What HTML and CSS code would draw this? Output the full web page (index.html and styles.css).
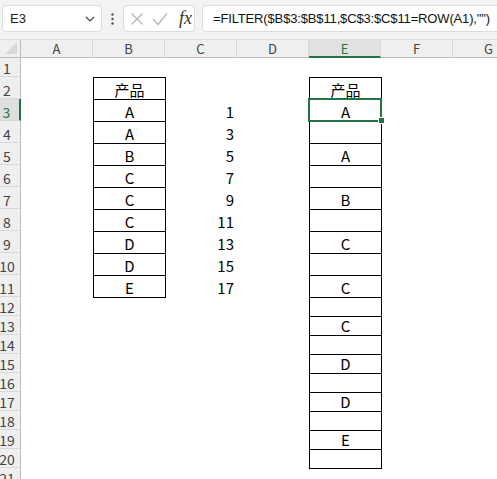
FILE: index.html
```html
<!DOCTYPE html>
<html>
<head>
<meta charset="utf-8">
<link rel="stylesheet" href="styles.css">
</head>
<body>
<div class="toolbar">
  <div class="namebox"><span>E3</span>
    <svg class="chev" width="10" height="6" viewBox="0 0 10 6"><path d="M1 1 L5 5 L9 1" fill="none" stroke="#444" stroke-width="1.2"/></svg>
  </div>
  <div class="dots">
    <svg width="3" height="12" viewBox="0 0 3 12"><circle cx="1.5" cy="1.5" r="1.2" fill="#555"/><circle cx="1.5" cy="6" r="1.2" fill="#555"/><circle cx="1.5" cy="10.5" r="1.2" fill="#555"/></svg>
  </div>
  <div class="fxbox">
    <svg class="ico" width="14" height="14" viewBox="0 0 14 14"><path d="M1.5 1.5 L12.5 12.5 M12.5 1.5 L1.5 12.5" stroke="#b5b5b5" stroke-width="1.2" fill="none"/></svg>
    <svg class="ico" width="16" height="14" viewBox="0 0 16 14"><path d="M1 7 L6 12.5 L15 1.5" stroke="#b5b5b5" stroke-width="1.2" fill="none"/></svg>
    <span class="fx">fx</span>
  </div>
  <div class="formula">=FILTER($B$3:$B$11,$C$3:$C$11=ROW(A1),"")</div>
</div>
<div class="sheet">
  <div class="corner"><svg width="12" height="12" viewBox="0 0 12 12"><path d="M12 0 L12 12 L0 12 Z" fill="#d9d9d9"/></svg></div>
  <div class="ch">A</div><div class="ch">B</div><div class="ch">C</div><div class="ch">D</div><div class="ch sel">E</div><div class="ch">F</div><div class="ch">G</div>

  <div class="rh">1</div>
  <div class="rh">2</div><div class="cell cb bx">产品</div><div class="cell ce bx">产品</div>
  <div class="rh sel">3</div><div class="cell cb bx">A</div><div class="cell cc">1</div><div class="cell ce bx active">A<span class="selbox"></span><span class="handle"></span></div>
  <div class="rh">4</div><div class="cell cb bx">A</div><div class="cell cc">3</div><div class="cell ce bx"></div>
  <div class="rh">5</div><div class="cell cb bx">B</div><div class="cell cc">5</div><div class="cell ce bx">A</div>
  <div class="rh">6</div><div class="cell cb bx">C</div><div class="cell cc">7</div><div class="cell ce bx"></div>
  <div class="rh">7</div><div class="cell cb bx">C</div><div class="cell cc">9</div><div class="cell ce bx">B</div>
  <div class="rh">8</div><div class="cell cb bx">C</div><div class="cell cc">11</div><div class="cell ce bx"></div>
  <div class="rh">9</div><div class="cell cb bx">D</div><div class="cell cc">13</div><div class="cell ce bx">C</div>
  <div class="rh">10</div><div class="cell cb bx">D</div><div class="cell cc">15</div><div class="cell ce bx"></div>
  <div class="rh">11</div><div class="cell cb bx last">E</div><div class="cell cc">17</div><div class="cell ce bx">C</div>
  <div class="rh">12</div><div class="cell ce bx"></div>
  <div class="rh">13</div><div class="cell ce bx">C</div>
  <div class="rh">14</div><div class="cell ce bx"></div>
  <div class="rh">15</div><div class="cell ce bx">D</div>
  <div class="rh">16</div><div class="cell ce bx"></div>
  <div class="rh">17</div><div class="cell ce bx">D</div>
  <div class="rh">18</div><div class="cell ce bx"></div>
  <div class="rh">19</div><div class="cell ce bx">E</div>
  <div class="rh">20</div><div class="cell ce bx last"></div>
  <div class="rh">21</div>
</div>
</body>
</html>
```
FILE: styles.css
```css
* { box-sizing: border-box; }
body {
  margin: 0;
  width: 497px;
  height: 479px;
  overflow: hidden;
  background: #fff;
  font-family: "Noto Sans CJK SC", sans-serif;
}
.toolbar {
  height: 40px;
  background: #f3f3f3;
  border-bottom: 1px solid #e1e1e1;
  display: flex;
  align-items: flex-start;
  padding: 5px 0 0 2px;
  white-space: nowrap;
  overflow: hidden;
}
.toolbar > * { flex-shrink: 0; }
.namebox {
  width: 100px;
  height: 27px;
  background: #fff;
  border: 1px solid #dcdcdc;
  border-radius: 4px;
  display: flex;
  align-items: center;
  justify-content: space-between;
  padding: 0 6px 0 7px;
  font: 13px "Liberation Sans", sans-serif;
  color: #222;
}
.dots {
  width: 21px;
  height: 27px;
  display: flex;
  align-items: center;
  justify-content: center;
}
.fxbox {
  width: 72px;
  height: 27px;
  background: #fff;
  border: 1px solid #dcdcdc;
  border-radius: 4px;
  display: flex;
  align-items: center;
  padding-left: 6px;
  gap: 8px;
}
.fx {
  font: italic 18px "Liberation Serif", serif;
  color: #333;
  margin-left: 3px;
}
.formula {
  margin-left: 7px;
  width: 320px;
  height: 27px;
  background: #fff;
  border: 1px solid #dcdcdc;
  border-radius: 4px;
  padding-left: 10px;
  display: flex;
  align-items: center;
  font: 13px "Liberation Sans", sans-serif;
  color: #111;
  letter-spacing: -0.15px;
}
.sheet {
  display: grid;
  grid-template-columns: 21px repeat(7, 72px);
  grid-template-rows: 18px 19px repeat(10, 22px) repeat(10, 19px);
}
.corner {
  grid-column: 1;
  background: #efefef;
  border-right: 1px solid #bdbdbd;
  border-bottom: 1px solid #bdbdbd;
  display: flex;
  align-items: flex-end;
  justify-content: flex-end;
  padding: 0 3px 3px 0;
}
.ch {
  background: #efefef;
  border-right: 1px solid #d8d8d8;
  border-bottom: 1px solid #bdbdbd;
  display: flex;
  align-items: center;
  justify-content: center;
  font-size: 13px;
  line-height: 1;
  color: #444;
}
.ch.sel {
  background: #e1e1e1;
  border-bottom: 2px solid #217346;
  color: #217346;
}
.rh {
  grid-column: 1;
  background: #efefef;
  border-right: 1px solid #bdbdbd;
  border-bottom: 1px solid #d8d8d8;
  display: flex;
  align-items: flex-end;
  justify-content: center;
  padding: 0 6px 1px 0;
  font-size: 14px;
  line-height: 1;
  color: #444;
}
.rh.sel {
  background: #dedede;
  border-right: 2px solid #217346;
  color: #217346;
}
.cell {
  display: flex;
  align-items: flex-end;
  justify-content: center;
  font-size: 15px;
  line-height: 1;
  padding-bottom: 2px;
  color: #000;
}
.cb { grid-column: 3; }
.cc { grid-column: 4; justify-content: flex-end; padding-right: 3px; }
.ce { grid-column: 6; }
.bx {
  border: 1px solid #000;
  border-bottom: none;
  margin-right: -1px;
}
.bx.last {
  border-bottom: 1px solid #000;
  margin-bottom: -1px;
}
.active { position: relative; }
.selbox {
  position: absolute;
  left: -2px;
  top: -2px;
  right: -1px;
  bottom: -1px;
  border: 2px solid #217346;
}
.handle {
  position: absolute;
  right: -4px;
  bottom: -3px;
  width: 7px;
  height: 7px;
  background: #217346;
  border: 1px solid #fff;
}
```
